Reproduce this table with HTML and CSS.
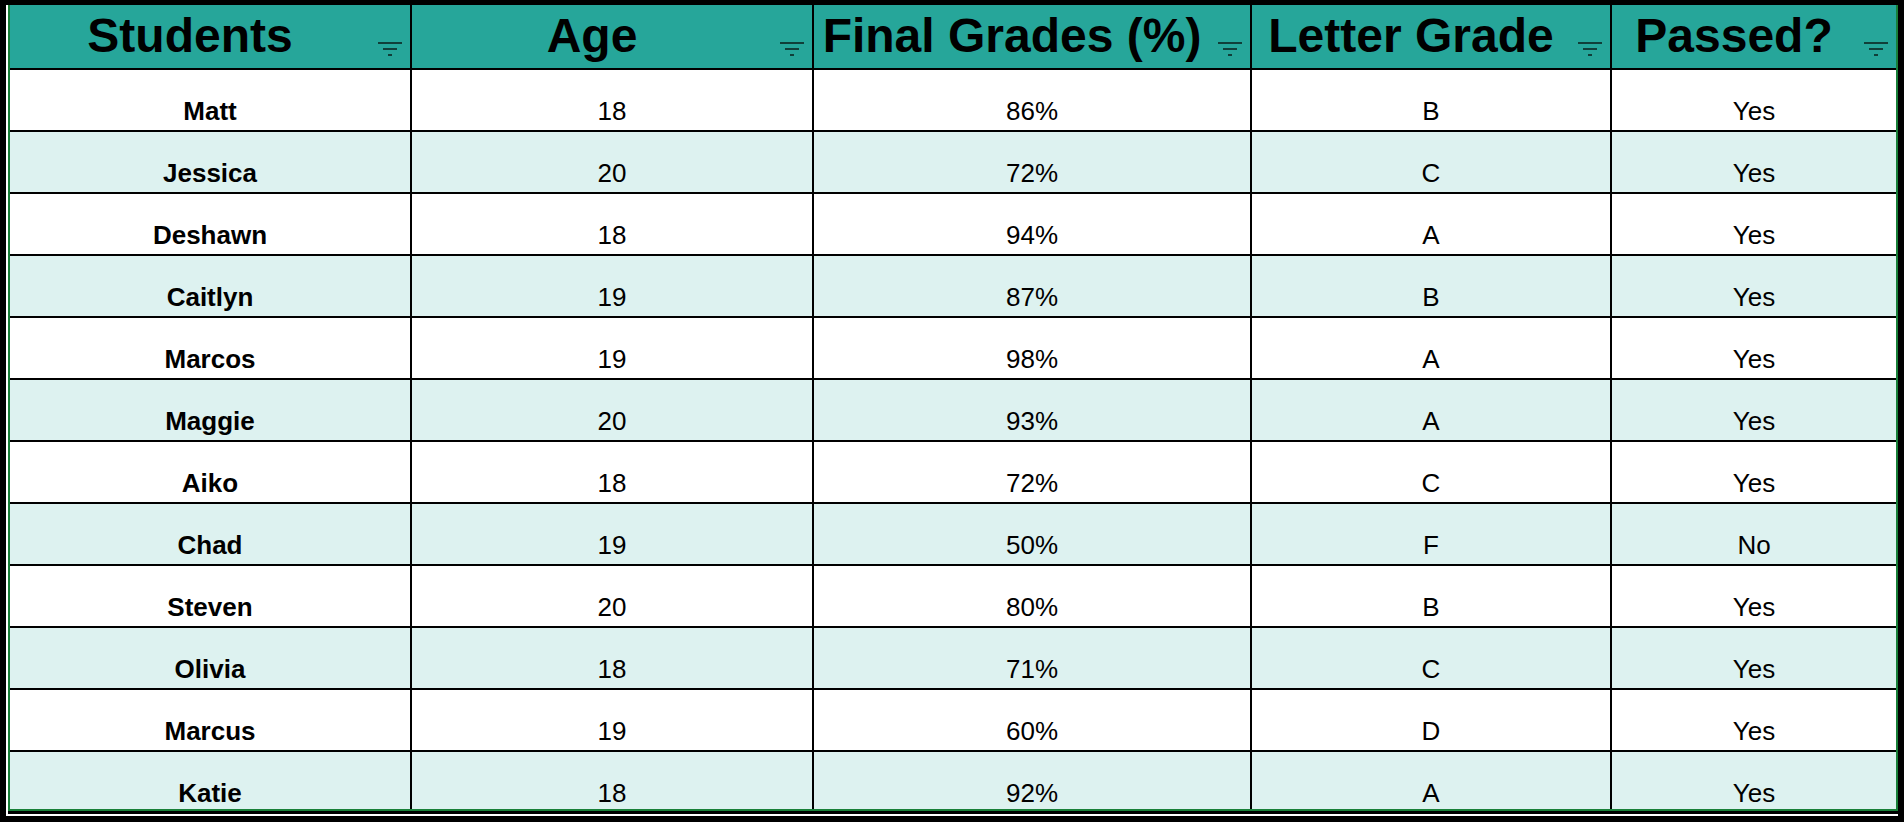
FILE: index.html
```html
<!DOCTYPE html>
<html lang="en">
<head>
<meta charset="utf-8">
<title>Student Grades</title>
<link rel="stylesheet" href="styles.css">
</head>
<body>
<div class="frame">
  <div class="sheet">
    <div class="row head">
      <div class="cell">Students<svg class="filter" viewBox="0 0 24 14" width="24" height="14"><rect x="0" y="0" width="24" height="2"/><rect x="5" y="6" width="14" height="2"/><rect x="10" y="12" width="4" height="2"/></svg></div>
      <div class="cell">Age<svg class="filter" viewBox="0 0 24 14" width="24" height="14"><rect x="0" y="0" width="24" height="2"/><rect x="5" y="6" width="14" height="2"/><rect x="10" y="12" width="4" height="2"/></svg></div>
      <div class="cell">Final Grades (%)<svg class="filter" viewBox="0 0 24 14" width="24" height="14"><rect x="0" y="0" width="24" height="2"/><rect x="5" y="6" width="14" height="2"/><rect x="10" y="12" width="4" height="2"/></svg></div>
      <div class="cell">Letter Grade<svg class="filter" viewBox="0 0 24 14" width="24" height="14"><rect x="0" y="0" width="24" height="2"/><rect x="5" y="6" width="14" height="2"/><rect x="10" y="12" width="4" height="2"/></svg></div>
      <div class="cell">Passed?<svg class="filter" viewBox="0 0 24 14" width="24" height="14"><rect x="0" y="0" width="24" height="2"/><rect x="5" y="6" width="14" height="2"/><rect x="10" y="12" width="4" height="2"/></svg></div>
    </div>
    <div class="row"><div class="cell name">Matt</div><div class="cell">18</div><div class="cell">86%</div><div class="cell">B</div><div class="cell">Yes</div></div>
    <div class="row alt"><div class="cell name">Jessica</div><div class="cell">20</div><div class="cell">72%</div><div class="cell">C</div><div class="cell">Yes</div></div>
    <div class="row"><div class="cell name">Deshawn</div><div class="cell">18</div><div class="cell">94%</div><div class="cell">A</div><div class="cell">Yes</div></div>
    <div class="row alt"><div class="cell name">Caitlyn</div><div class="cell">19</div><div class="cell">87%</div><div class="cell">B</div><div class="cell">Yes</div></div>
    <div class="row"><div class="cell name">Marcos</div><div class="cell">19</div><div class="cell">98%</div><div class="cell">A</div><div class="cell">Yes</div></div>
    <div class="row alt"><div class="cell name">Maggie</div><div class="cell">20</div><div class="cell">93%</div><div class="cell">A</div><div class="cell">Yes</div></div>
    <div class="row"><div class="cell name">Aiko</div><div class="cell">18</div><div class="cell">72%</div><div class="cell">C</div><div class="cell">Yes</div></div>
    <div class="row alt"><div class="cell name">Chad</div><div class="cell">19</div><div class="cell">50%</div><div class="cell">F</div><div class="cell">No</div></div>
    <div class="row"><div class="cell name">Steven</div><div class="cell">20</div><div class="cell">80%</div><div class="cell">B</div><div class="cell">Yes</div></div>
    <div class="row alt"><div class="cell name">Olivia</div><div class="cell">18</div><div class="cell">71%</div><div class="cell">C</div><div class="cell">Yes</div></div>
    <div class="row"><div class="cell name">Marcus</div><div class="cell">19</div><div class="cell">60%</div><div class="cell">D</div><div class="cell">Yes</div></div>
    <div class="row alt last"><div class="cell name">Katie</div><div class="cell">18</div><div class="cell">92%</div><div class="cell">A</div><div class="cell">Yes</div></div>
  </div>
</div>
</body>
</html>
```

FILE: styles.css
```css
html, body {
  margin: 0;
  padding: 0;
  background: #000;
}

body {
  font-family: "Liberation Sans", Arial, sans-serif;
  color: #000;
}

.frame {
  margin: 5px 0 0 6px;
  width: 1890px;
  border-left: 2px solid #fff;
  border-bottom: 2px solid #fff;
  padding-bottom: 3px;
}

.sheet {
  display: flex;
  flex-direction: column;
  row-gap: 2px;
  background: #000;
  border-left: 2px solid #188038;
  border-right: 2px solid #188038;
  border-bottom: 2px solid #188038;
  width: 1886px;
}

.row {
  display: grid;
  grid-template-columns: 400px 400px 436px 358px 284px;
  column-gap: 2px;
  height: 60px;
}

.row.head { height: 63px; }
.row.last { height: 57px; }

.cell {
  background: #fff;
  display: flex;
  align-items: flex-end;
  justify-content: center;
  font-size: 26px;
  line-height: 30px;
  padding-bottom: 4px;
  box-sizing: border-box;
  white-space: nowrap;
}

.row.last .cell { padding-bottom: 1px; }

.row.alt .cell { background: #ddf2f0; }

.cell.name { font-weight: bold; }

.head .cell {
  position: relative;
  background: #26a69a;
  font-size: 48px;
  font-weight: bold;
  line-height: 56px;
  padding-bottom: 4px;
  padding-right: 40px;
}

.filter {
  position: absolute;
  right: 8px;
  bottom: 12px;
  fill: #103f39;
}
```
